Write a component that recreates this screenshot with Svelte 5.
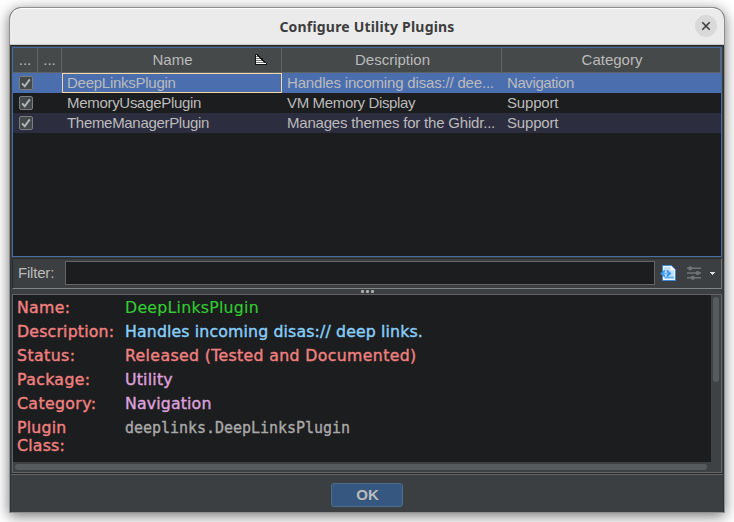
<script>
  const rows = [
    { name: 'DeepLinksPlugin', ns: -0.26, desc: 'Handles incoming disas:// dee...', ds: -0.18, cat: 'Navigation', cs: -0.4, sel: true },
    { name: 'MemoryUsagePlugin', ns: -0.3, desc: 'VM Memory Display', ds: -0.35, cat: 'Support', cs: -0.18 },
    { name: 'ThemeManagerPlugin', ns: -0.31, desc: 'Manages themes for the Ghidr...', ds: -0.2, cat: 'Support', cs: -0.18, alt: true }
  ];
  const details = [
    { label: 'Name:', ls: 0.3, value: 'DeepLinksPlugin', vs: 0.24, kind: 'lime' },
    { label: 'Description:', ls: 0.18, value: 'Handles incoming disas:// deep links.', vs: 0.13, kind: 'sky' },
    { label: 'Status:', ls: 0.4, value: 'Released (Tested and Documented)', vs: 0.33, kind: 'coral' },
    { label: 'Package:', ls: 0.34, value: 'Utility', vs: 0.2, kind: 'plum' },
    { label: 'Category:', ls: 0.35, value: 'Navigation', vs: 0.15, kind: 'plum' },
    { label: 'Plugin Class:', ls: 0.2, value: 'deeplinks.DeepLinksPlugin', vs: -0.03, kind: 'mono' }
  ];
</script>

<div class="desktop">
  <div class="window">
    <header class="title">
      <span class="caption">Configure Utility Plugins</span>
      <button class="close" aria-label="Close">
        <svg width="10" height="10" viewBox="0 0 10 10"><path d="M1.3 1.3 8.7 8.7M8.7 1.3 1.3 8.7" stroke="#3d3d3d" stroke-width="1.6" /></svg>
      </button>
    </header>
    <div class="body">
      <div class="table">
        <div class="row head">
          <div class="c1">...</div>
          <div class="c2">...</div>
          <div class="c3">Name
            <svg class="sort" width="13" height="13" viewBox="0 0 13 13" shape-rendering="crispEdges">
              <path d="M0 1h3v1h1v1h1v1h1v1h2v2h1v1h1v1h1v1h1v2H0z" fill="#161616" />
              <path d="M1 2h1v1H1zM1 4h3v1H1zM1 6h5v1H1zM1 8h7v1H1zM1 10h10v1H1z" fill="#fff" />
              <path d="M1 3h2v1H1zM1 5h4v1H1zM1 7h6v1H1zM1 9h8v1H1z" fill="#777" />
            </svg>
          </div>
          <div class="c4">Description</div>
          <div class="c5">Category</div>
        </div>
        {#each rows as r}
          <div class="row" class:sel={r.sel} class:alt={r.alt}>
            <div class="c1">
              <svg width="14" height="14" viewBox="0 0 14 14"><rect x=".5" y=".5" width="13" height="13" rx="1.5" fill="#43494a" stroke="#7b7d7e" /><path d="M3.1 7.3 5.7 10.3 10.8 3.4" fill="none" stroke="#b4b6b6" stroke-width="1.9" /></svg>
            </div>
            <div class="c2"></div>
            <div class="c3" class:focus={r.sel} style:letter-spacing="{r.ns}px">{r.name}</div>
            <div class="c4" style:letter-spacing="{r.ds}px">{r.desc}</div>
            <div class="c5" style:letter-spacing="{r.cs}px">{r.cat}</div>
          </div>
        {/each}
      </div>
      <div class="filter">
        <span class="flabel">Filter:</span>
        <div class="input"></div>
        <svg class="page" width="16" height="16" viewBox="0 0 16 16">
          <path d="M2.5.5h9l4 4v11h-13z" fill="#cfe5fb" stroke="#4087dc" />
          <path d="M3.5 1.5H11v3.5h3.5v9.5h-11z" fill="#c5def9" stroke="#edf6ff" />
          <path d="M11 1v4h4z" fill="#fff" />
          <path d="M5 12.5h9" stroke="#5cb0f2" stroke-width="1.6" />
          <path d="M4.5 5 .4 8.5l4.1 3.5V10L3.3 8.5 4.5 7zM7 5l4.2 3.5L7 12v-2l1.3-1.5L7 7z" fill="#379af0" stroke="#2f8ce5" stroke-width=".6" />
          <path d="M3.5 8.5h4" stroke="#6bb5f2" stroke-width="1.6" />
        </svg>
        <svg class="sliders" width="14" height="14" viewBox="0 0 14 14" fill="#717475">
          <path d="M0 1.5h14v1.5H0zM0 6.3h14v1.5H0zM0 11h14v1.5H0z" />
          <circle cx="3.2" cy="2.3" r="2.1" /><circle cx="10.7" cy="7" r="2.1" /><circle cx="5.8" cy="11.8" r="2.1" />
        </svg>
        <svg class="arrow" width="5" height="3" viewBox="0 0 5 3" shape-rendering="crispEdges"><path d="M0 0h5v1H4v1H3v1H2V2H1V1H0z" fill="#ddd" /></svg>
      </div>
      <div class="split"><i></i><i></i><i></i></div>
      <div class="info">
        <div class="view">
          <div class="text">
            {#each details as d}
              <div class="line">
                <div class="label"><span class="wide" style:letter-spacing="{d.ls}px">{d.label}</span></div>
                <div class={d.kind} class:wide={d.kind !== 'mono'} style:letter-spacing="{d.vs}px">{d.value}</div>
              </div>
            {/each}
          </div>
          <div class="vbar"><div></div></div>
        </div>
        <div class="hbar"><div></div></div>
      </div>
      <div class="buttons"><button class="ok">OK</button></div>
    </div>
  </div>
</div>

<style>
  .desktop {
    width: 734px;
    height: 522px;
    box-sizing: border-box;
    padding: 7px 9px 9px;
    overflow: hidden;
    background: #fff;
    font-family: 'Liberation Sans', Arial, sans-serif;
    font-size: 15px;
    color: #bbb;
  }
  .window {
    width: 716px;
    height: 506px;
    box-sizing: border-box;
    border: 1px solid #8f8f8f;
    border-radius: 12px 12px 0 0;
    overflow: hidden;
    background: #3c3f41;
    display: flex;
    flex-direction: column;
    box-shadow: 0 3px 14px rgba(0, 0, 0, 0.55);
  }
  .title {
    height: 37px;
    box-sizing: border-box;
    background: #ebebeb;
    border-top: 1px solid #fff;
    border-bottom: 1px solid #c8c8c8;
    border-radius: 11px 11px 0 0;
    display: flex;
    align-items: center;
    justify-content: center;
    position: relative;
    flex: none;
  }
  .caption {
    font: bold 14px 'Noto Sans', sans-serif;
    letter-spacing: 0.19px;
    color: #3d3d3d;
    white-space: nowrap;
  }
  .close {
    position: absolute;
    right: 7px;
    top: 6px;
    width: 22px;
    height: 22px;
    border: 0;
    padding: 0;
    border-radius: 50%;
    background: #d9d9d9;
    display: flex;
    align-items: center;
    justify-content: center;
  }
  .body {
    flex: 1;
    display: flex;
    flex-direction: column;
    border-top: 1px solid #282a2b;
    border-left: 1px solid #303234;
    border-right: 1px solid #303234;
    padding: 1px 1px 0;
    background: #3c3f41;
  }
  .table {
    height: 210px;
    box-sizing: border-box;
    border: 1px solid #466d9f;
    background: #1c1d1e;
    flex: none;
  }
  .row {
    display: flex;
    height: 20px;
    line-height: 20px;
    background: #1c1d1e;
    white-space: nowrap;
  }
  .row > div { box-sizing: border-box; padding-left: 6px; flex: none; }
  .row > .c1 { width: 25px; }
  .row > .c2 { width: 24px; }
  .row > .c3 { width: 220px; }
  .row > .c4 { width: 220px; }
  .row > .c5 { flex: 1; }
  .row .c3, .row .c4, .row .c5 { padding-left: 5px; }
  .row .c1 svg { display: block; margin: 3px 0 0; }
  .sel { background: #4b6eaf; }
  .alt { background: #2d2d40; }
  .row > .focus { border: 1px solid #f5d7a5; line-height: 18px; padding-left: 4px; }
  .row.head {
    height: 25px;
    box-sizing: border-box;
    line-height: 24px;
    background: #45494a;
    border-bottom: 1px solid #5e6364;
  }
  .head > div {
    border-right: 1px solid #616566;
    text-align: center;
    position: relative;
  }
  .row.head > .c1, .row.head > .c2 { padding: 0; }
  .row.head > .c3, .row.head > .c4, .row.head > .c5 { padding-left: 2px; }
  .sort { position: absolute; right: 13px; top: 5px; }
  .filter {
    height: 31px;
    box-sizing: border-box;
    margin-top: 1px;
    border-top: 1px solid #28292a;
    border-left: 1px solid #282a2b;
    border-right: 1px solid #707374;
    border-bottom: 1px solid #808586;
    display: flex;
    align-items: center;
    flex: none;
  }
  .flabel { width: 52px; padding-left: 5px; margin-top: -2px; box-sizing: border-box; letter-spacing: -0.2px; }
  .input {
    width: 590px;
    height: 24px;
    box-sizing: border-box;
    border: 1px solid #646464;
    background: #1c1d1e;
    margin-bottom: 1px;
  }
  .page { margin: -1px 0 0 5px; }
  .sliders { margin: -1px 0 0 11px; }
  .arrow { margin: -1px 0 0 9px; }
  .split {
    height: 5px;
    display: flex;
    justify-content: center;
    align-items: center;
    gap: 2px;
    flex: none;
  }
  .split i { width: 3px; height: 3px; border-radius: 1px; background: #adadad; }
  .info {
    height: 179px;
    box-sizing: border-box;
    border: 1px solid #646464;
    background: #3f4244;
    display: flex;
    flex-direction: column;
    flex: none;
  }
  .view { height: 167px; display: flex; }
  .text {
    width: 698px;
    background: #1c1d1e;
    font-family: 'DejaVu Sans', sans-serif;
    padding: 4px 0 0 4px;
    box-sizing: border-box;
  }
  .line { display: flex; line-height: 18px; margin-bottom: 6px; white-space: nowrap; }
  .label, .sky, .coral, .plum { -webkit-text-stroke: 0.4px; }
  .wide { display: inline-block; transform: scaleX(1.05); transform-origin: 0 50%; }
  .lime { color: #32cd32; -webkit-text-stroke: 0.15px; }
  .label { width: 108px; flex: none; color: #f08080; white-space: normal; }
  .label .wide { vertical-align: top; }
  .line:last-child .label { width: 80px; margin-right: 28px; }
  .sky { color: #87cefa; }
  .coral { color: #f08080; }
  .plum { color: #dda0dd; }
  .mono { font-family: 'DejaVu Sans Mono', monospace; color: #a9a9a9; -webkit-text-stroke: 0.35px; }
  .vbar { padding: 2px; }
  .vbar div { width: 6px; height: 85px; border-radius: 3px; background: #565b5e; }
  .hbar { padding: 2px; }
  .hbar div { width: 692px; height: 6px; border-radius: 3px; background: #565b5e; }
  .buttons {
    flex: 1;
    margin: 0 -1px;
    border-top: 1px solid #282a2b;
    box-shadow: inset 0 1px #616466;
    display: flex;
    justify-content: center;
    padding-top: 9px;
  }
  .ok {
    width: 72px;
    height: 24px;
    padding: 0 0 2px 1px;
    border: 1px solid #4c708c;
    border-radius: 3px;
    background: #365880;
    color: #bbb;
    font: bold 15px 'Liberation Sans', Arial, sans-serif;
  }
</style>
